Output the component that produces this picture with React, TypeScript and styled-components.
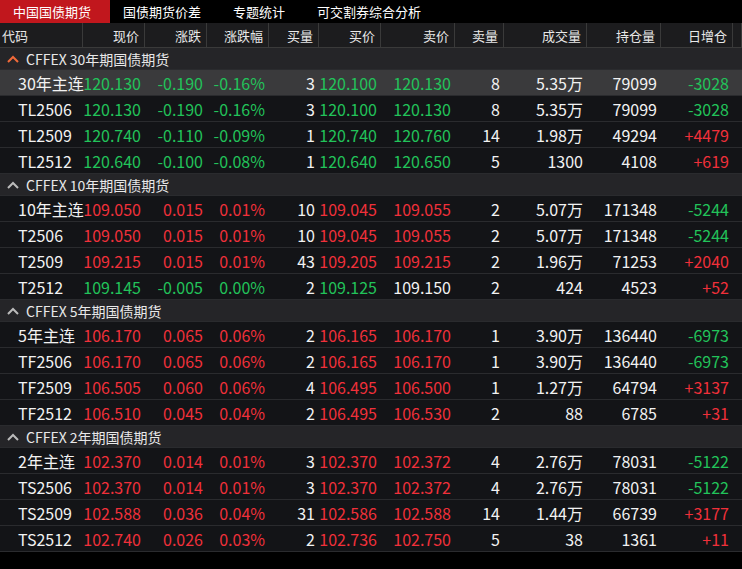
import React from 'react';
import styled, { createGlobalStyle } from 'styled-components';

const Global = createGlobalStyle`
  body { margin: 0; background: #000; font-family: "Microsoft YaHei", "Noto Sans CJK SC", sans-serif; }
`;

const cols = [83, 62, 62, 62, 50, 62, 74, 49, 83, 74, 72, 9];
const grid = cols.map((c) => `${c}px`).join(' ');

const Page = styled.div`
  width: 742px;
  height: 569px;
  background: #000;
  overflow: hidden;
`;

const Tabs = styled.div`
  display: flex;
  height: 23px;
  background: #000;
`;

const Tab = styled.div<{ $active?: boolean }>`
  padding: 0 19px 0 13px;
  display: flex;
  align-items: center;
  font-size: 13px;
  color: #fff;
  background: ${(p) => (p.$active ? '#c1171d' : 'transparent')};
`;

const Row = styled.div<{ $head?: boolean; $sel?: boolean }>`
  display: grid;
  grid-template-columns: ${grid};
  height: ${(p) => (p.$head ? 25 : 26)}px;
  align-items: stretch;
  background: ${(p) => (p.$head ? '#1c1c1e' : p.$sel ? '#3a3a3c' : '#131417')};
  border-bottom: 1px solid ${(p) => (p.$head ? '#3a3a3a' : '#2a2b2e')};
  box-sizing: border-box;
`;

const HeadCell = styled.div<{ $left?: boolean }>`
  display: flex;
  align-items: center;
  justify-content: ${(p) => (p.$left ? 'flex-start' : 'flex-end')};
  padding: 0 5px 0 2px;
  font-size: 13px;
  color: #e8e8e8;
  border-right: 1px solid #3a3a3a;
  white-space: nowrap;
`;

const Cell = styled.div<{ $c?: string; $left?: boolean }>`
  display: flex;
  align-items: center;
  justify-content: ${(p) => (p.$left ? 'flex-start' : 'flex-end')};
  padding: ${(p) => (p.$left ? '0 0 0 18px' : '0 4px 0 0')};
  font-size: 16px;
  color: ${(p) => p.$c || '#f2f2f2'};
  white-space: nowrap;
  font-family: "Microsoft YaHei", "Noto Sans CJK SC", sans-serif;
`;

const Group = styled.div`
  display: flex;
  align-items: center;
  gap: 6px;
  height: 22px;
  padding-left: 6px;
  background: #252528;
  border-bottom: 1px solid #2a2b2e;
  box-sizing: border-box;
  font-size: 14px;
  color: #e8e8e8;
`;

const G = '#22c35a';
const R = '#f0303a';
const W = '#f2f2f2';

type D = [string, string, string, string, string, string, string, string, string, string, string];

const groups: { title: string; active?: boolean; rows: D[] }[] = [
  {
    title: 'CFFEX 30年期国债期货',
    active: true,
    rows: [
      ['30年主连', '120.130', '-0.190', '-0.16%', '3', '120.100', '120.130', '8', '5.35万', '79099', '-3028'],
      ['TL2506', '120.130', '-0.190', '-0.16%', '3', '120.100', '120.130', '8', '5.35万', '79099', '-3028'],
      ['TL2509', '120.740', '-0.110', '-0.09%', '1', '120.740', '120.760', '14', '1.98万', '49294', '+4479'],
      ['TL2512', '120.640', '-0.100', '-0.08%', '1', '120.640', '120.650', '5', '1300', '4108', '+619'],
    ],
  },
  {
    title: 'CFFEX 10年期国债期货',
    rows: [
      ['10年主连', '109.050', '0.015', '0.01%', '10', '109.045', '109.055', '2', '5.07万', '171348', '-5244'],
      ['T2506', '109.050', '0.015', '0.01%', '10', '109.045', '109.055', '2', '5.07万', '171348', '-5244'],
      ['T2509', '109.215', '0.015', '0.01%', '43', '109.205', '109.215', '2', '1.96万', '71253', '+2040'],
      ['T2512', '109.145', '-0.005', '0.00%', '2', '109.125', '109.150', '2', '424', '4523', '+52'],
    ],
  },
  {
    title: 'CFFEX 5年期国债期货',
    rows: [
      ['5年主连', '106.170', '0.065', '0.06%', '2', '106.165', '106.170', '1', '3.90万', '136440', '-6973'],
      ['TF2506', '106.170', '0.065', '0.06%', '2', '106.165', '106.170', '1', '3.90万', '136440', '-6973'],
      ['TF2509', '106.505', '0.060', '0.06%', '4', '106.495', '106.500', '1', '1.27万', '64794', '+3137'],
      ['TF2512', '106.510', '0.045', '0.04%', '2', '106.495', '106.530', '2', '88', '6785', '+31'],
    ],
  },
  {
    title: 'CFFEX 2年期国债期货',
    rows: [
      ['2年主连', '102.370', '0.014', '0.01%', '3', '102.370', '102.372', '4', '2.76万', '78031', '-5122'],
      ['TS2506', '102.370', '0.014', '0.01%', '3', '102.370', '102.372', '4', '2.76万', '78031', '-5122'],
      ['TS2509', '102.588', '0.036', '0.04%', '31', '102.586', '102.588', '14', '1.44万', '66739', '+3177'],
      ['TS2512', '102.740', '0.026', '0.03%', '2', '102.736', '102.750', '5', '38', '1361', '+11'],
    ],
  },
];

const sign = (v: string) => (v.startsWith('-') ? G : v.startsWith('+') ? R : parseFloat(v) === 0 ? W : R);
const priceColor = (change: string) => {
  const n = parseFloat(change);
  return n < 0 ? G : n > 0 ? R : W;
};

const Chevron = ({ active }: { active?: boolean }) => (
  <svg width="14" height="10" viewBox="0 0 14 10">
    <path d="M2 8 L7 3 L12 8" fill="none" stroke={active ? '#f06a3a' : '#bbb'} strokeWidth="2" />
  </svg>
);

const heads = ['代码', '现价', '涨跌', '涨跌幅', '买量', '买价', '卖价', '卖量', '成交量', '持仓量', '日增仓'];

export default function App() {
  let first = true;
  return (
    <Page>
      <Global />
      <Tabs>
        <Tab $active>中国国债期货</Tab>
        <Tab>国债期货价差</Tab>
        <Tab>专题统计</Tab>
        <Tab>可交割券综合分析</Tab>
      </Tabs>
      <Row $head>
        {heads.map((h, i) => (
          <HeadCell key={h} $left={i === 0}>{h}</HeadCell>
        ))}
        <HeadCell />
      </Row>
      {groups.map((g) => (
        <div key={g.title}>
          <Group>
            <Chevron active={g.active} />
            {g.title}
          </Group>
          {g.rows.map((r) => {
            const sel = first;
            first = false;
            const pc = priceColor(r[2]);
            // bid/ask coloured against the previous settlement price
            const bc = (v: string) => {
              const prev = parseFloat(r[1]) - parseFloat(r[2]);
              const n = parseFloat(v) - prev;
              return Math.abs(n) < 1e-6 ? W : n < 0 ? G : R;
            };
            return (
              <Row key={r[0]} $sel={sel}>
                <Cell $left>{r[0]}</Cell>
                <Cell $c={pc}>{r[1]}</Cell>
                <Cell $c={pc}>{r[2]}</Cell>
                <Cell $c={pc}>{r[3]}</Cell>
                <Cell>{r[4]}</Cell>
                <Cell $c={bc(r[5])}>{r[5]}</Cell>
                <Cell $c={bc(r[6])}>{r[6]}</Cell>
                <Cell>{r[7]}</Cell>
                <Cell>{r[8]}</Cell>
                <Cell>{r[9]}</Cell>
                <Cell $c={sign(r[10])}>{r[10]}</Cell>
                <Cell />
              </Row>
            );
          })}
        </div>
      ))}
    </Page>
  );
}
